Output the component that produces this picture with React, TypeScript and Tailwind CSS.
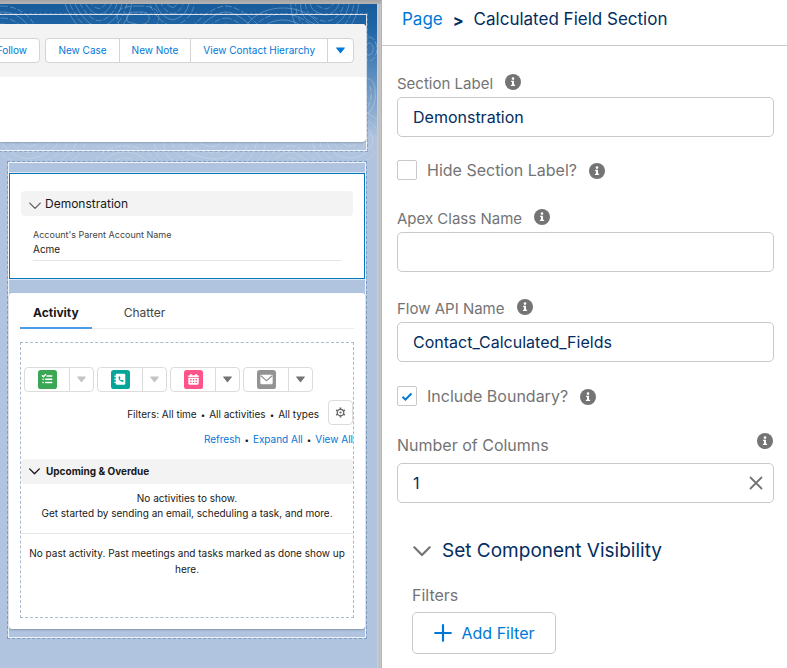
import React, { useState } from "react";
import { clsx } from "clsx";

function InfoIcon() {
  return (
    <svg viewBox="0 0 16 16" className="h-4 w-4 flex-none" aria-hidden="true">
      <circle cx="8" cy="8" r="8" fill="#747474" />
      <circle cx="8" cy="4.6" r="1.3" fill="#fff" />
      <path d="M6.1 6.8h2.9v3.9h1.1v1.2H5.9v-1.2H7V8h-.9z" fill="#fff" />
    </svg>
  );
}

function Caret({ className }: { className: string }) {
  return (
    <svg viewBox="0 0 10 7" className={clsx("h-[7px] w-[9px]", className)} aria-hidden="true">
      <path d="M.6.3h8.8c.4 0 .6.5.3.8L5.5 6.3a.6.6 0 0 1-1 0L.3 1.1C0 .8.2.3.6.3z" fill="currentColor" />
    </svg>
  );
}

function Chevron({ className }: { className: string }) {
  return (
    <svg viewBox="0 0 16 10" className={className} fill="none" stroke="currentColor" strokeLinecap="round" strokeLinejoin="round" aria-hidden="true">
      <path d="M1 1.2l7 7 7-7" />
    </svg>
  );
}

function ringPath(cx: number, cy: number, rx: number, ry: number, k: number) {
  const a = rx * 0.55;
  const b = ry * 0.55;
  return `M${cx} ${cy - ry}C${cx + a + k} ${cy - ry} ${cx + rx} ${cy - b - k} ${cx + rx} ${cy}S${cx + a - k} ${cy + ry + k} ${cx - k} ${cy + ry}S${cx - rx} ${cy + b + k} ${cx - rx} ${cy}S${cx - a - k} ${cy - ry} ${cx} ${cy - ry}`;
}

const hills = [
  { x: 98, y: -8, n: 7, sx: 0.8 },
  { x: 2, y: 38, n: 6, sx: 1 },
  { x: 138, y: 14, n: 2, sx: 1.6 },
  { x: 172, y: -3, n: 4, sx: 0.9 },
  { x: 283, y: 34, n: 5, sx: 1.3 },
  { x: 325, y: -8, n: 7, sx: 0.8 },
  { x: 226, y: 38, n: 6, sx: 1.1 },
  { x: 369, y: 45, n: 2, sx: 0.6 },
  { x: 362, y: 92, n: 3, sx: 0.7 },
  { x: 30, y: 136, n: 6, sx: 1.5 },
  { x: 125, y: 166, n: 4, sx: 1.3 },
  { x: 210, y: 136, n: 6, sx: 1.5 },
  { x: 290, y: 166, n: 4, sx: 1.2 },
  { x: 350, y: 136, n: 5, sx: 1.2 },
];

function Contours() {
  return (
    <svg className="pointer-events-none absolute inset-x-0 top-0 h-[156px] w-full" viewBox="0 0 377 156" preserveAspectRatio="none" fill="none" stroke="#fff" aria-hidden="true">
      {hills.map((h, i) =>
        Array.from({ length: h.n }, (_, j) => (
          <path
            key={`${i}-${j}`}
            d={ringPath(h.x, h.y, (7 + j * 6) * h.sx, 6 + j * 6, ((i % 3) - 1) * (2 + j))}
            strokeOpacity={h.y > 120 ? 0.2 : 0.26}
            strokeDasharray={j % 2 ? "6 2" : undefined}
          />
        )),
      )}
    </svg>
  );
}

function ActionButton({ children }: { children: React.ReactNode }) {
  return <button className="border-l border-[#d4d4d4] px-3 first:border-l-0">{children}</button>;
}

function PageHeader() {
  return (
    <div className="border-y border-r border-white/80 pb-2 pt-[9px] outline outline-1 outline-dashed outline-[#6f8fbd]/60">
      <div className="h-[118px] rounded-r bg-white shadow-[0_1px_2px_rgba(0,0,0,0.2)]">
        <div className="flex h-[53px] items-center justify-between rounded-tr bg-[#f3f3f3] pr-3 text-[10px] text-[#0078d8]">
          <button className="-ml-6 h-[25px] w-16 rounded border border-[#d4d4d4] bg-white pr-3 text-right">Follow</button>
          <div className="flex h-[25px] rounded border border-[#d4d4d4] bg-white">
            <ActionButton>New Case</ActionButton>
            <ActionButton>New Note</ActionButton>
            <ActionButton>View Contact Hierarchy</ActionButton>
            <button className="border-l border-[#d4d4d4] px-2" aria-label="More actions">
              <Caret className="text-[#0078d8]" />
            </button>
          </div>
        </div>
      </div>
    </div>
  );
}

function FieldSection() {
  return (
    <section className="h-[106px] border border-[#0277bd] bg-white px-[11px] pt-[17px] outline outline-1 outline-white/60">
      <button className="flex h-[25px] w-full items-center gap-1 rounded bg-[#f3f3f3] px-2 text-left text-[12px] text-[#181818]">
        <Chevron className="mt-1 h-2 w-3 stroke-[1.5] text-[#555]" />
        Demonstration
      </button>
      <dl className="mx-3 border-b border-[#e5e5e5] pb-[3px] pt-[11px] text-[10px] leading-[15px] text-[#181818]">
        <dt className="text-[9px] text-[#444]">Account's Parent Account Name</dt>
        <dd>Acme</dd>
      </dl>
    </section>
  );
}

function TaskGlyph() {
  return (
    <g fill="none" stroke="#fff" strokeWidth="1.5" strokeLinecap="round" strokeLinejoin="round">
      <path d="M4.5 6l1.2 1.2L8 4.8M9.5 6.3h5M8 9.7h6.5M8 13.2h6.5M5.2 9.7h.3M5.2 13.2h.3" />
    </g>
  );
}

function CallGlyph() {
  return (
    <g>
      <rect x="5" y="4" width="10" height="11.5" rx="1.4" fill="#fff" />
      <path d="M3.8 6.5h1.6M3.8 9.7h1.6M3.8 13h1.6" stroke="#fff" strokeLinecap="round" />
      <path d="M8 7.2c-.5 2.7 1.7 5.4 4.7 5.3l.7-1.2-1.7-1-1 .6c-.7-.3-1.2-.9-1.4-1.6l.7-.9-.7-1.8z" fill="#06a59a" />
    </g>
  );
}

function EventGlyph() {
  return (
    <g>
      <path d="M4.5 8.5h11V14a1.5 1.5 0 0 1-1.5 1.5H6A1.5 1.5 0 0 1 4.5 14zM4.5 7.5v-.8c0-.7.5-1.2 1.2-1.2h.8V4.3h1.4v1.2h4.2V4.3h1.4v1.2h.8c.7 0 1.2.5 1.2 1.2v.8z" fill="#fff" />
      <path d="M6.5 10.3H8M9.3 10.3h1.5M12.1 10.3h1.5M6.5 13H8M9.3 13h1.5M12.1 13h1.5" stroke="#ff538a" strokeWidth="1.4" />
    </g>
  );
}

function MailGlyph() {
  return (
    <g>
      <rect x="3.500" y="5" width="13" height="10" rx="1.200" fill="#fff" />
      <path d="M4 6l6 5.200L16 6" fill="none" stroke="#939393" strokeWidth="1.300" />
    </g>
  );
}

const activities = [
  { name: "task", color: "#3ba755", glyph: <TaskGlyph />, caret: "text-[#c4c4c4]" },
  { name: "call", color: "#06a59a", glyph: <CallGlyph />, caret: "text-[#c4c4c4]" },
  { name: "event", color: "#ff538a", glyph: <EventGlyph />, caret: "text-[#747474]" },
  { name: "email", color: "#939393", glyph: <MailGlyph />, caret: "text-[#747474]" },
];

function Dot() {
  return <span className="mx-1 text-[8px]">•</span>;
}

function ActivityPanel() {
  return (
    <section className="rounded-[3px] bg-white px-[11px] pb-[11px] pt-1 shadow-[0_1px_2px_rgba(0,0,0,0.25)]">
      <div role="tablist" className="flex h-8 border-b border-[#ececec] text-[12px] leading-8 text-[#444]">
        <button role="tab" aria-selected="true" className="h-8 border-b-2 border-[#4a9bea] px-[13px] font-bold text-[#181818]">
          Activity
        </button>
        <button role="tab" aria-selected="false" className="ml-5 h-8 px-3">
          Chatter
        </button>
      </div>
      <div className="mt-[13px] h-[276px] border border-dashed border-[#a9bacd] text-[10px] text-[#181818]">
        <div className="ml-[3px] mt-6 flex gap-[3px]">
          {activities.map((a) => (
            <div key={a.name} className="flex h-[25px] w-[70px] rounded border border-[#dcdcdc]">
              <button className="flex flex-1 items-center justify-center" aria-label={`New ${a.name}`}>
                <svg viewBox="0 0 20 20" className="h-[19px] w-[19px]" aria-hidden="true">
                  <rect width="20" height="20" rx="3" fill={a.color} />
                  {a.glyph}
                </svg>
              </button>
              <button className="flex w-6 items-center justify-center border-l border-[#dcdcdc]" aria-label={`More ${a.name} actions`}>
                <Caret className={a.caret} />
              </button>
            </div>
          ))}
        </div>
        <div className="mt-2 flex items-center justify-end gap-[9px]">
          <p className="pt-[3px]">
            Filters: All time
            <Dot />
            All activities
            <Dot />
            All types
          </p>
          <button className="flex h-[25px] w-[25px] items-center justify-center rounded border border-[#dcdcdc] text-[#666]" aria-label="Timeline settings">
            <svg viewBox="0 0 12 12" className="h-[11px] w-[11px]" fill="none" stroke="currentColor" aria-hidden="true">
              <circle cx="6" cy="6" r="3.500" strokeWidth="1.300" />
              <circle cx="6" cy="6" r="1.200" fill="currentColor" stroke="none" />
              <path d="M6 .6v2M6 9.400v2M1.300 3.300l1.700 1M9 7.700l1.700 1M1.300 8.700l1.700-1M9 4.300l1.700-1" strokeWidth="1.800" />
            </svg>
          </button>
        </div>
        <p className="mt-[6px] text-right leading-4">
          <a href="#refresh" className="text-[#0078d8]">Refresh</a>
          <Dot />
          <a href="#expand" className="text-[#0078d8]">Expand All</a>
          <Dot />
          <a href="#all" className="text-[#0078d8]">View All</a>
        </p>
        <button className="mt-[11px] flex h-[25px] w-full items-center gap-[6px] rounded bg-[#f3f3f3] px-2 font-bold">
          <Chevron className="h-[7px] w-[11px] stroke-2" />
          Upcoming &amp; Overdue
        </button>
        <p className="border-b border-[#e5e5e5] pb-3 pt-[7px] text-center leading-[15px]">
          No activities to show.
          <br />
          Get started by sending an email, scheduling a task, and more.
        </p>
        <p className="px-1 pt-[11px] text-center leading-4">No past activity. Past meetings and tasks marked as done show up here.</p>
      </div>
    </section>
  );
}

function Canvas() {
  return (
    <main className="relative w-[377px] flex-none bg-[#b0c4df] bg-[linear-gradient(#185c9c_0px,#1f64a5_24px,#b0c4df_134px)] pt-[10px]">
      <Contours />
      <div className="relative mr-[10px]">
        <PageHeader />
        <div className="ml-[7px] mt-[10px] border border-dashed border-[#7f9cc4]">
          <div className="border border-white/80 bg-[#b0c4df] pb-2 pt-[10px]">
            <FieldSection />
            <div className="mt-[14px]">
              <ActivityPanel />
            </div>
          </div>
        </div>
      </div>
    </main>
  );
}

function Field({ id, label, value = "", className }: { id: string; label: string; value?: string; className?: string }) {
  return (
    <div className={className}>
      <div className="mb-[3px] flex gap-3">
        <label htmlFor={id} className="text-[15px] leading-5 text-[#747474]">{label}</label>
        <InfoIcon />
      </div>
      <input id={id} defaultValue={value} className="h-10 w-full rounded-[5px] border border-[#c9c9c9] px-[15px] text-[16px] text-[#032d60] outline-none" />
    </div>
  );
}

function Check({ id, label, on = false, className }: { id: string; label: string; on?: boolean; className?: string }) {
  return (
    <div className={clsx("flex h-5 items-center", className)}>
      <span className="relative h-5 w-5">
        <input id={id} type="checkbox" defaultChecked={on} className="peer block h-5 w-5 appearance-none rounded-[2px] border border-[#c9c9c9] bg-white" />
        <svg viewBox="0 0 20 20" className="pointer-events-none absolute inset-0 hidden h-5 w-5 peer-checked:block" fill="none" stroke="#0078d8" strokeWidth="2" aria-hidden="true">
          <path d="M5.500 10.700l2.900 2.900L14.500 7.500" />
        </svg>
      </span>
      <label htmlFor={id} className="ml-[10px] mr-3 text-[16px] leading-5 text-[#747474]">{label}</label>
      <span className="pt-[2px]">
        <InfoIcon />
      </span>
    </div>
  );
}

function Properties() {
  const [columns, setColumns] = useState("1");
  return (
    <aside className="min-w-0 flex-1 bg-white">
      <nav className="flex h-[46px] items-center gap-[10px] border-b border-[#c9c9c9] pb-[5px] pl-5 text-[17px] text-[#032d60]">
        <a href="#page" className="text-[#0078d8]">Page</a>
        <span className="text-[16px] font-bold">&gt;</span>
        <span>Calculated Field Section</span>
      </nav>
      <form className="pl-[15px] pr-[13px] pt-7">
        <Field id="section" label="Section Label" value="Demonstration" />
        <Check id="hide" label="Hide Section Label?" className="mt-[23px]" />
        <Field id="apex" label="Apex Class Name" className="mt-[29px]" />
        <Field id="flow" label="Flow API Name" value="Contact_Calculated_Fields" className="mt-[27px]" />
        <Check id="boundary" label="Include Boundary?" on className="mt-6" />
        <div className="mt-[27px] flex justify-between pr-px">
          <label htmlFor="columns" className="pt-[2px] text-[16px] leading-5 text-[#747474]">Number of Columns</label>
          <InfoIcon />
        </div>
        <div className="mt-2 flex h-10 items-center rounded-[5px] border border-[#c9c9c9] pr-[10px]">
          <input id="columns" value={columns} onChange={(e) => setColumns(e.target.value)} className="min-w-0 flex-1 px-[15px] text-[16px] text-[#032d60] outline-none" />
          <button type="button" aria-label="Clear" onClick={() => setColumns("")}>
            <svg viewBox="0 0 14 14" className="h-[14px] w-[14px]" stroke="#747474" strokeWidth="1.800" strokeLinecap="round" aria-hidden="true">
              <path d="M1.500 1.500l11 11M12.500 1.500l-11 11" />
            </svg>
          </button>
        </div>
        <div className="px-[15px]">
          <button type="button" className="mt-9 flex h-6 items-center gap-[10px] text-[19px] text-[#032d60]">
            <Chevron className="h-[11px] w-5 stroke-2 text-[#747474]" />
            Set Component Visibility
          </button>
          <p className="mt-[22px] text-[16px] leading-5 text-[#747474]">Filters</p>
          <button type="button" className="mt-[7px] flex h-[42px] w-36 items-center justify-center gap-[10px] rounded-[5px] border border-[#c9c9c9] text-[16px] text-[#0078d8]">
            <svg viewBox="0 0 18 18" className="h-[18px] w-[18px]" stroke="currentColor" strokeWidth="2.200" strokeLinecap="round" aria-hidden="true">
              <path d="M9 1.200v15.600M1.200 9h15.600" />
            </svg>
            Add Filter
          </button>
        </div>
      </form>
    </aside>
  );
}

export default function App() {
  return (
    <div className="flex min-h-screen font-[Inter,'Liberation_Sans',sans-serif]">
      <div className="flex flex-none flex-col border-r border-[#b4b4b4] bg-[linear-gradient(to_right,#d2d2d2_377px,#bdbdbd_379px,#c9c9c9_381px)]">
        <div className="h-1 bg-[linear-gradient(#a3a3a3,#b5b5b5)]" />
        <div className="flex flex-1 pr-1">
          <Canvas />
        </div>
      </div>
      <Properties />
    </div>
  );
}
